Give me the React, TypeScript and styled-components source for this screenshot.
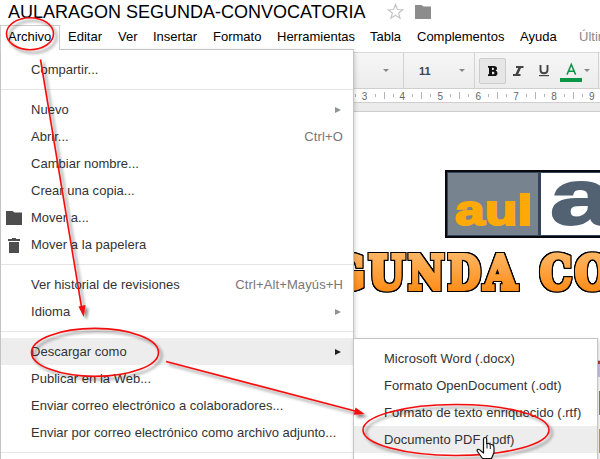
import React from "react";
import styled, { createGlobalStyle } from "styled-components";

const GlobalStyle = createGlobalStyle`
  body { margin: 0; background: #fff; overflow: hidden; }
  * { box-sizing: border-box; }
`;

const Screen = styled.div`
  position: relative;
  width: 600px;
  height: 459px;
  overflow: hidden;
  background: #fff;
  color: #000;
  font: 13px/27px "Liberation Sans", Arial, sans-serif;
  white-space: nowrap;
  display: flex;
  flex-direction: column;
`;

const TitleBar = styled.header`
  display: flex;
  height: 25px;
  padding-left: 8px;
  flex: none;
`;
const Title = styled.h1`
  margin: 0;
  width: 379px;
  font-size: 18px;
  font-weight: 400;
  line-height: 25px;
`;
const StarIcon = styled.svg`
  width: 17px;
  height: 17px;
  margin-top: 3px;
`;
const FolderIcon = styled.svg`
  width: 16px;
  height: 14px;
  flex: none;
`;
const TitleFolder = styled(FolderIcon)`
  margin: 5px 0 0 11px;
`;

const MenuBar = styled.nav`
  display: flex;
  height: 27px;
  flex: none;
`;
const MenuTab = styled.div<{ $w: number; $active?: boolean; $muted?: boolean }>`
  width: ${(p) => p.$w}px;
  flex: none;
  height: ${(p) => (p.$active ? 25 : 24)}px;
  line-height: ${(p) => (p.$active ? 22 : 24)}px;
  padding-left: ${(p) => (p.$active ? 7 : 8)}px;
  border: ${(p) => (p.$active ? "1px solid #ccc" : "0")};
  border-bottom: 0;
  color: ${(p) => (p.$muted ? "#888" : "#000")};
  background: #fff;
  position: relative;
  z-index: ${(p) => (p.$active ? 3 : 0)};
`;

const Toolbar = styled.div`
  height: 37px;
  flex: none;
  margin-left: 353px;
  display: flex;
  align-items: stretch;
  border-top: 1px solid #d9d9d9;
  border-bottom: 1px solid #cfcfcf;
  background: linear-gradient(#f6f6f6, #ececec);
`;
const ToolGroup = styled.div<{ $w: number; $pad: number }>`
  width: ${(p) => p.$w}px;
  flex: none;
  padding-left: ${(p) => p.$pad}px;
  display: flex;
  align-items: center;
  border-right: 1px solid #d2d2d2;
`;
const SizeValue = styled.span`
  width: 40px;
  font: bold 11px "Liberation Sans", Arial, sans-serif;
  color: #444;
`;
const Caret = styled.i`
  border: 3px solid transparent;
  border-top-color: #888;
  border-bottom: 0;
`;
const ToolButton = styled.div<{ $w: number; $pressed?: boolean }>`
  width: ${(p) => p.$w}px;
  height: 26px;
  flex: none;
  display: flex;
  align-items: center;
  justify-content: center;
  border: 1px solid ${(p) => (p.$pressed ? "#ccc" : "transparent")};
  border-radius: 2px;
  background: ${(p) => (p.$pressed ? "#e6e6e6" : "transparent")};
`;

const Ruler = styled.div`
  margin-left: 353px;
  height: 14px;
  flex: none;
  background: #fff;
  border-bottom: 1px solid #cfcfcf;
`;
const RulerScale = styled.svg`
  display: block;
  width: 247px;
  height: 13px;
`;
const Canvas = styled.main`
  margin-left: 353px;
  flex: 1;
  padding-top: 8px;
  background: #ebebeb;
`;
const Page = styled.div`
  height: 348px;
  border-top: 1px solid #ccc;
  background: #fff;
`;
const Artwork = styled.svg`
  display: block;
  width: 247px;
  height: 347px;
`;

const Popup = styled.div`
  position: absolute;
  z-index: 2;
  padding: 6px 0;
  background: #fff;
  border: 1px solid #c4c4c4;
  box-shadow: 1px 2px 4px rgba(0, 0, 0, 0.18);
  color: #333;
`;
const FileMenu = styled(Popup)`
  left: 0;
  top: 49px;
  width: 354px;
  height: 430px;
`;
const SubMenu = styled(Popup)`
  left: 353px;
  top: 338px;
  width: 245px;
  height: 140px;
`;
const MenuRow = styled.div<{ $hover?: boolean }>`
  height: 27px;
  display: flex;
  align-items: center;
  padding: 0 10px 0 5px;
  background: ${(p) => (p.$hover ? "#ededed" : "transparent")};
`;
const IconSlot = styled.span`
  width: 25px;
  display: flex;
  flex: none;
`;
const Label = styled.span`
  flex: 1;
  letter-spacing: 0.02px;
`;
const SubLabel = styled(Label)`
  padding-left: 25px;
`;
const Shortcut = styled.span`
  color: #777;
  letter-spacing: 0.12px;
`;
const SubArrow = styled.i<{ $dark?: boolean }>`
  border: 3px solid transparent;
  border-left: 6px solid ${(p) => (p.$dark ? "#222" : "#909396")};
  border-right: 0;
  margin-right: 2px;
`;
const Separator = styled.hr`
  height: 1px;
  border: 0;
  margin: 6px 0;
  background: #e5e5e5;
`;
const Annotations = styled.svg`
  position: absolute;
  z-index: 5;
  inset: 0;
  width: 600px;
  height: 459px;
`;

const Folder = ({ fill }: { fill: string }) => (
  <path d="M0 0H6.5L8.5 1.5H16V14H0Z" fill={fill} />
);
const MenuFolder = () => (
  <FolderIcon viewBox="0 0 16 14"><Folder fill="#4d4d4d" /></FolderIcon>
);
const Trash = () => (
  <svg width="16" height="16" viewBox="0 0 16 16">
    <path d="M2 2H6V1H10V2H14V4H2ZM3 5H13V16H3Z" fill="#4d4d4d" />
  </svg>
);

type Item = { text: string; icon?: React.ReactNode; keys?: string; arrow?: boolean; hover?: boolean };

const groups: Item[][] = [
  [{ text: "Compartir..." }],
  [
    { text: "Nuevo", arrow: true },
    { text: "Abrir...", keys: "Ctrl+O" },
    { text: "Cambiar nombre..." },
    { text: "Crear una copia..." },
    { text: "Mover a...", icon: <MenuFolder /> },
    { text: "Mover a la papelera", icon: <Trash /> },
  ],
  [
    { text: "Ver historial de revisiones", keys: "Ctrl+Alt+Mayús+H" },
    { text: "Idioma", arrow: true },
  ],
  [
    { text: "Descargar como", arrow: true, hover: true },
    { text: "Publicar en la Web..." },
    { text: "Enviar correo electrónico a colaboradores..." },
    { text: "Enviar por correo electrónico como archivo adjunto..." },
  ],
  [],
];

const formats = [
  "Microsoft Word (.docx)",
  "Formato OpenDocument (.odt)",
  "Formato de texto enriquecido (.rtf)",
  "Documento PDF (.pdf)",
];

const tabs: [string, number][] = [
  ["Editar", 50], ["Ver", 35], ["Insertar", 60], ["Formato", 64],
  ["Herramientas", 93], ["Tabla", 47], ["Complementos", 103], ["Ayuda", 59],
];

const wordArt: [string, number, number][] = [
  ["G", 329, 36], ["U", 369, 35.5], ["N", 408.5, 35.5], ["D", 448, 32.5],
  ["A", 484, 32.5], ["C", 540, 31.5], ["O", 575, 35],
];

export default function App() {
  return (
    <Screen>
      <GlobalStyle />
      <TitleBar>
        <Title>AULARAGON SEGUNDA-CONVOCATORIA</Title>
        <StarIcon viewBox="0 0 17 17">
          <path d="M8.5 1.5L10.4 6.5L15.8 6.7L11.6 10L13 15.2L8.5 12.2L4 15.2L5.4 10L1.2 6.7L6.6 6.5Z" fill="#fff" stroke="#c4c4c4" strokeWidth="1.2" />
        </StarIcon>
        <TitleFolder viewBox="0 0 16 14"><Folder fill="#8c8c8c" /></TitleFolder>
      </TitleBar>
      <MenuBar>
        <MenuTab $w={60} $active>Archivo</MenuTab>
        {tabs.map(([name, w]) => <MenuTab key={name} $w={w}>{name}</MenuTab>)}
        <MenuTab $w={60} $muted>Última</MenuTab>
      </MenuBar>
      <Toolbar>
        <ToolGroup $w={51} $pad={30}><Caret /></ToolGroup>
        <ToolGroup $w={71} $pad={15}><SizeValue>11</SizeValue><Caret /></ToolGroup>
        <ToolGroup $w={124} $pad={4}>
          <ToolButton $w={27} $pressed>
            <svg width="10" height="10" viewBox="0 0 10 10">
              <path fillRule="evenodd" d="M0 0H6Q9 0 9 2.6Q9 4.2 7.6 4.8Q9.5 5.3 9.5 7.2Q9.5 10 6.2 10H0V8.3H1V1.7H0ZM4 1.8V4H5Q6 4 6 2.9Q6 1.8 5 1.8ZM4 5.7V8.2H5.2Q6.4 8.2 6.4 7Q6.4 5.7 5.2 5.7Z" fill="#111" />
            </svg>
          </ToolButton>
          <ToolButton $w={25}>
            <svg width="11" height="10" viewBox="0 0 11 10"><path d="M3 0H10.5V2H8L5.3 8H7.5V10H0V8H2.5L5.2 2H3Z" fill="#444" /></svg>
          </ToolButton>
          <ToolButton $w={26}>
            <svg width="10" height="12" viewBox="0 0 10 12"><path d="M1.5 0V5Q1.5 8.3 5 8.3Q8.5 8.3 8.5 5V0" fill="none" stroke="#444" strokeWidth="1.9" /><path d="M0 10H10V11.2H0Z" fill="#444" /></svg>
          </ToolButton>
          <ToolButton $w={27}>
            <svg width="22" height="22" viewBox="0 0 22 22"><path d="M7 14.6L11.3 4.5L15.6 14.6M8.5 11.3H14.1" fill="none" stroke="#0b9646" strokeWidth="1.5" /><path d="M0 18H22V22H0Z" fill="#0b9646" /></svg>
          </ToolButton>
          <Caret />
        </ToolGroup>
      </Toolbar>
      <Ruler>
        <RulerScale viewBox="353 89 247 13">
          {Array.from({ length: 7 }, (_, i) => {
            const x = 364.5 + i * 37.9;
            return (
              <g key={i}>
                <text x={x} y="99.5" textAnchor="middle" fontSize="10" fill="#666">{i + 3}</text>
                <path d={`M${Math.round(x + 10) + 0.5} 94v3M${Math.round(x + 19) + 0.5} 92v7M${Math.round(x + 28) + 0.5} 94v3`} stroke="#b5b5b5" />
              </g>
            );
          })}
          <path d="M355.5 94v3" stroke="#b5b5b5" />
        </RulerScale>
      </Ruler>
      <Canvas>
        <Page>
          <Artwork viewBox="353 112 247 347">
            <defs>
              <linearGradient id="orange" gradientUnits="userSpaceOnUse" x1="0" y1="252" x2="0" y2="293">
                <stop offset="0" stopColor="#ffb765" /><stop offset="1" stopColor="#ff8a14" />
              </linearGradient>
              <filter id="outline" filterUnits="userSpaceOnUse" x="320" y="240" width="300" height="65" colorInterpolationFilters="sRGB">
                <feMorphology in="SourceAlpha" operator="dilate" radius="1" result="edge" />
                <feGaussianBlur in="edge" stdDeviation="0.4" result="soft" />
                <feComponentTransfer in="soft" result="dark"><feFuncA type="linear" slope="1.5" /></feComponentTransfer>
                <feMerge><feMergeNode in="dark" /><feMergeNode in="SourceGraphic" /></feMerge>
              </filter>
            </defs>
            <rect x="445" y="170" width="170" height="68" fill="#07090d" />
            <rect x="447" y="172" width="168" height="64" fill="#35445a" />
            <rect x="448" y="173" width="90" height="62" fill="#77838f" />
            <rect x="541" y="173" width="70" height="62" fill="#fff" />
            <g fontFamily="Liberation Sans" fontWeight="700">
              <text x="455" y="225" fontSize="42" textLength="77" lengthAdjust="spacingAndGlyphs" fill="#fdaa08" stroke="#fdaa08" strokeWidth="2">aul</text>
              <text x="550" y="224" fontSize="78" textLength="62" lengthAdjust="spacingAndGlyphs" fill="#526273" stroke="#526273" strokeWidth="2">a</text>
            </g>
            <g fontFamily="DejaVu Serif" fontWeight="700" fontSize="46" strokeLinejoin="miter" fill="url(#orange)" stroke="url(#orange)" strokeWidth="4" filter="url(#outline)">
              {wordArt.map(([c, x, w]) => (
                <text key={x} x={x} y="289" textLength={w} lengthAdjust="spacingAndGlyphs">{c}</text>
              ))}
            </g>
            <path d="M598 360h2v17h-2z" fill="#c9c2f0" /><path d="M598 361h2v3h-2z" fill="#c23b2b" />
            <path d="M599 391h1v24h-1z" fill="#7f9140" /><path d="M599 429h1v24h-1z" fill="#bba642" />
          </Artwork>
        </Page>
      </Canvas>

      <FileMenu>
        {groups.map((g, gi) => (
          <React.Fragment key={gi}>
            {gi > 0 && <Separator />}
            {g.map((it) => (
              <MenuRow key={it.text} $hover={it.hover}>
                <IconSlot>{it.icon}</IconSlot>
                <Label>{it.text}</Label>
                {it.keys && <Shortcut>{it.keys}</Shortcut>}
                {it.arrow && <SubArrow $dark={it.hover} />}
              </MenuRow>
            ))}
          </React.Fragment>
        ))}
      </FileMenu>
      <SubMenu>
        {formats.map((f, i) => (
          <MenuRow key={f} $hover={i === 3}><SubLabel>{f}</SubLabel></MenuRow>
        ))}
      </SubMenu>

      <Annotations viewBox="0 0 600 459">
        <defs>
          <filter id="cast" filterUnits="userSpaceOnUse" x="0" y="0" width="600" height="459">
            <feDropShadow dx="3" dy="3" stdDeviation="1.5" floodColor="#000" floodOpacity="0.45" />
          </filter>
        </defs>
        <g filter="url(#cast)" fill="none" stroke="#f40b0b" strokeWidth="1.6">
          <ellipse cx="30" cy="33.7" rx="23.5" ry="16" />
          <ellipse cx="95" cy="352.4" rx="63.5" ry="24" />
          <ellipse cx="456" cy="430" rx="93" ry="25.5" />
          <path d="M40.5 59.5L81.5 307M166 361.5L355 411" />
          <path d="M78.5 306.5L85.5 305L83.7 317ZM355.5 407.5L364.5 414L353.8 414.8Z" fill="#f40b0b" stroke="none" />
        </g>
        <path d="M483.5 450.5V439Q483.5 437.5 485 437.5Q486.7 437.5 486.7 439V444Q489.5 442.5 490 445Q492.5 443.6 493.3 446Q494 446 494 448V452.5L491.5 458.5H482.5L477.5 451.5Q476.5 449.8 478 449.3Q479.5 449 481 451L483.5 453Z" fill="#fff" stroke="#111" strokeWidth="1.2" strokeLinejoin="round" />
        <path d="M487 444.5v4M490.3 445.5v3.5" stroke="#111" />
      </Annotations>
    </Screen>
  );
}
